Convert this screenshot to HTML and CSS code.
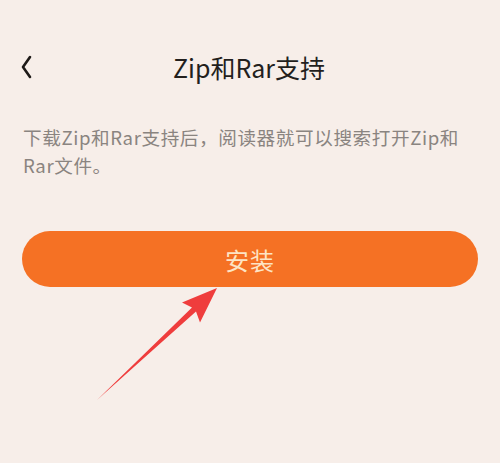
FILE: index.html
```html
<!DOCTYPE html>
<html lang="zh-CN">
<head>
<meta charset="utf-8">
<link rel="stylesheet" href="styles.css">
</head>
<body>
<div class="page">
  <header class="topbar">
    <span class="back">
      <svg width="14" height="24" viewBox="0 0 14 24"><path d="M10 2 L3 12 L10 22" fill="none" stroke="#1e1a18" stroke-width="2.6" stroke-linecap="round" stroke-linejoin="round"/></svg>
    </span>
    <h1 class="title">Zip和Rar支持</h1>
  </header>
  <p class="desc">下载Zip和Rar支持后，阅读器就可以搜索打开Zip和Rar文件。</p>
  <button class="install">安装</button>
  <svg class="arrow" width="500" height="463" viewBox="0 0 500 463"><polygon points="97,400 192,307.5 182,302.5 217,288 200,322.5 196,311.5" fill="#ef3d3d"/></svg>
</div>
</body>
</html>
```
FILE: styles.css
```css
html, body {
  margin: 0;
  padding: 0;
  background: #f7eee9;
}
.page {
  position: relative;
  width: 500px;
  height: 463px;
  font-family: "Noto Sans CJK SC", "Noto Sans", sans-serif;
  overflow: hidden;
}
.topbar {
  position: relative;
  height: 54px;
  margin-top: 40px;
  display: flex;
  align-items: center;
  justify-content: center;
}
.back {
  position: absolute;
  left: 20px;
  top: 15px;
  display: flex;
}
.title {
  margin: 0;
  font-size: 25px;
  font-weight: 400;
  color: #231f1d;
  line-height: 54px;
  padding-right: 2px;
}
.desc {
  margin: 29px 28px 0 23px;
  font-size: 18.6px;
  letter-spacing: 0.6px;
  line-height: 28px;
  color: #8a8480;
}
.install {
  display: block;
  margin: 52px 22px 0 22px;
  width: 456px;
  height: 56px;
  border: none;
  border-radius: 28px;
  background: #f57124;
  color: #fde4c4;
  font-family: "Noto Sans CJK SC", "Noto Sans", sans-serif;
  font-size: 24px;
  letter-spacing: 1px;
  padding: 0;
}
.arrow {
  position: absolute;
  left: 0;
  top: 0;
  pointer-events: none;
}
```
